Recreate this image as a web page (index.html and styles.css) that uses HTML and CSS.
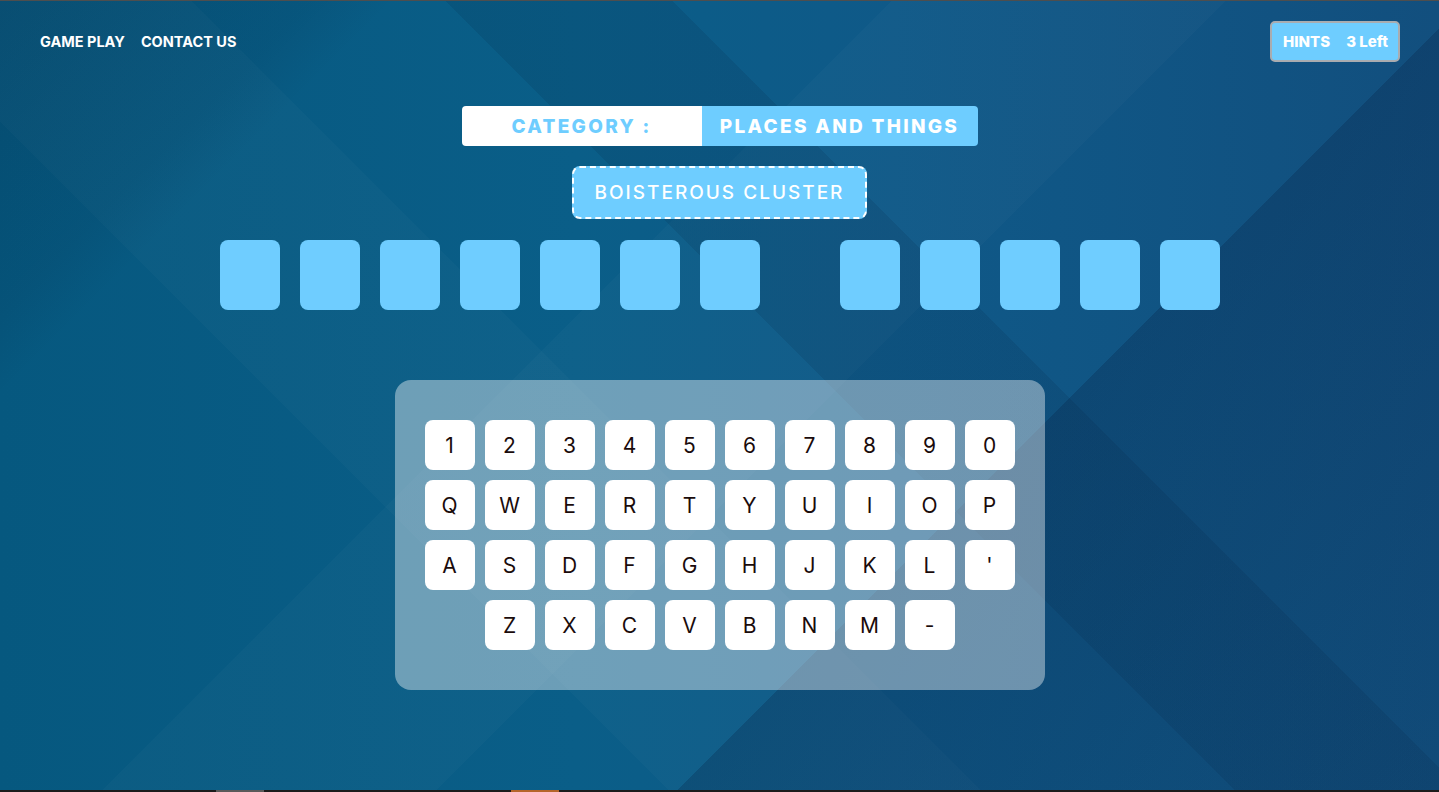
FILE: index.html
```html
<!DOCTYPE html>
<html lang="en">
<head>
<meta charset="utf-8">
<title>Word Puzzle</title>
<link rel="stylesheet" href="styles.css">
</head>
<body>
<div class="screen">
  <header class="topbar">
    <nav class="nav">
      <a class="nav-link" href="#">GAME PLAY</a>
      <a class="nav-link" href="#">CONTACT US</a>
    </nav>
    <div class="hints"><span>HINTS</span><span>3 Left</span></div>
  </header>

  <main class="game">
    <div class="category">
      <div class="cat-label">CATEGORY :</div>
      <div class="cat-value">PLACES AND THINGS</div>
    </div>

    <div class="clue">BOISTEROUS CLUSTER</div>

    <div class="answer">
      <div class="word">
        <div class="tile"></div><div class="tile"></div><div class="tile"></div><div class="tile"></div><div class="tile"></div><div class="tile"></div><div class="tile"></div>
      </div>
      <div class="word">
        <div class="tile"></div><div class="tile"></div><div class="tile"></div><div class="tile"></div><div class="tile"></div>
      </div>
    </div>

    <div class="keyboard">
      <div class="kb-row">
        <button class="key">1</button><button class="key">2</button><button class="key">3</button><button class="key">4</button><button class="key">5</button><button class="key">6</button><button class="key">7</button><button class="key">8</button><button class="key">9</button><button class="key">0</button>
      </div>
      <div class="kb-row">
        <button class="key">Q</button><button class="key">W</button><button class="key">E</button><button class="key">R</button><button class="key">T</button><button class="key">Y</button><button class="key">U</button><button class="key">I</button><button class="key">O</button><button class="key">P</button>
      </div>
      <div class="kb-row">
        <button class="key">A</button><button class="key">S</button><button class="key">D</button><button class="key">F</button><button class="key">G</button><button class="key">H</button><button class="key">J</button><button class="key">K</button><button class="key">L</button><button class="key">'</button>
      </div>
      <div class="kb-row">
        <button class="key">Z</button><button class="key">X</button><button class="key">C</button><button class="key">V</button><button class="key">B</button><button class="key">N</button><button class="key">M</button><button class="key">-</button>
      </div>
    </div>
  </main>
</div>
<div class="taskbar">
  <span class="tb-gap tb-gap-1"></span>
  <span class="tb-item tb-grey"></span>
  <span class="tb-gap tb-gap-2"></span>
  <span class="tb-item tb-orange"></span>
</div>
</body>
</html>
```

FILE: styles.css
```css
html, body {
  margin: 0;
  padding: 0;
  height: 792px;
  overflow: hidden;
  background: #1b1b1b;
}

body {
  font-family: "Inter", "Noto Sans", sans-serif;
}

.screen {
  height: 789px;
  border-top: 1px solid #4e4e4e;
  display: flex;
  flex-direction: column;
  background-color: #0a5983;
  background-image:
    linear-gradient(135deg, rgba(0, 20, 45, 0.18) 0%, rgba(0, 20, 45, 0.08) 14%, transparent 17.7%),
    linear-gradient(135deg, transparent 65.8%, rgba(4, 22, 55, 0.22) 65.8%, rgba(4, 22, 55, 0.14) 85%, rgba(4, 22, 55, 0.08) 100%),
    linear-gradient(45deg, transparent 55.4%, rgba(0, 15, 40, 0.10) 55.4%, rgba(0, 15, 40, 0.10) 65.6%, transparent 65.6%),
    linear-gradient(45deg, transparent 30%, rgba(255, 255, 255, 0.02) 30%, rgba(255, 255, 255, 0.02) 44%, transparent 44%),
    linear-gradient(135deg, transparent 40%, rgba(255, 255, 255, 0.02) 40%, rgba(255, 255, 255, 0.02) 55%, transparent 55%),
    linear-gradient(90deg, #06587f 0%, #0a5e88 40%, #0f5988 62%, #124f7e 100%);
}

/* ---------- top bar ---------- */
.topbar {
  display: flex;
  justify-content: space-between;
  align-items: center;
  padding: 20px 39px 0 40px;
}

.nav {
  display: flex;
  gap: 16px;
}

.nav-link {
  color: #ffffff;
  text-decoration: none;
  font-weight: 700;
  font-size: 14.5px;
  letter-spacing: 0;
}

.hints {
  height: 37px;
  display: flex;
  align-items: center;
  gap: 16px;
  padding: 0 10px 0 11px;
  background: #6ecdff;
  border: 2px solid #a9acb0;
  border-radius: 5px;
  color: #ffffff;
  font-weight: 800;
  font-size: 15px;
  letter-spacing: 0;
}

/* ---------- game area ---------- */
.game {
  display: flex;
  flex-direction: column;
  align-items: center;
}

.category {
  margin-top: 44px;
  display: flex;
  height: 40px;
  border-radius: 4px;
  overflow: hidden;
  font-weight: 800;
  font-size: 19px;
  letter-spacing: 2.3px;
}

.cat-label {
  width: 240px;
  background: #ffffff;
  color: #6ecdff;
  display: flex;
  align-items: center;
  justify-content: center;
}

.cat-value {
  width: 276px;
  background: #6ecdff;
  color: #ffffff;
  display: flex;
  align-items: center;
  justify-content: center;
}

.clue {
  margin-top: 20px;
  height: 49px;
  line-height: 49px;
  padding: 0 21px;
  background: #6ecdff;
  border: 2px dashed #ffffff;
  border-radius: 8px;
  color: #ffffff;
  font-weight: 500;
  font-size: 19px;
  letter-spacing: 2px;
}

.answer {
  margin-top: 21px;
  display: flex;
  gap: 80px;
}

.word {
  display: flex;
  gap: 20px;
}

.tile {
  width: 60px;
  height: 70px;
  background: #6fcdff;
  border-radius: 8px;
}

/* ---------- keyboard ---------- */
.keyboard {
  margin-top: 70px;
  width: 590px;
  padding: 40px 30px;
  background: rgba(255, 255, 255, 0.4);
  border-radius: 16px;
  display: flex;
  flex-direction: column;
  gap: 10px;
}

.kb-row {
  display: flex;
  justify-content: center;
  gap: 10px;
}

.key {
  width: 50px;
  height: 50px;
  padding: 0;
  border: none;
  border-radius: 8px;
  background: #ffffff;
  color: #1a0b0b;
  font-family: "Inter", "Noto Sans", sans-serif;
  font-size: 21px;
  font-weight: 400;
  display: flex;
  align-items: center;
  justify-content: center;
}

/* ---------- bottom strip ---------- */
.taskbar {
  height: 2px;
  display: flex;
  background: #1b1b1b;
}

.tb-gap-1 { width: 216px; }
.tb-gap-2 { width: 247px; }
.tb-item { width: 48px; }
.tb-grey { background: #5a5a5a; }
.tb-orange { background: #b5652a; }
```
